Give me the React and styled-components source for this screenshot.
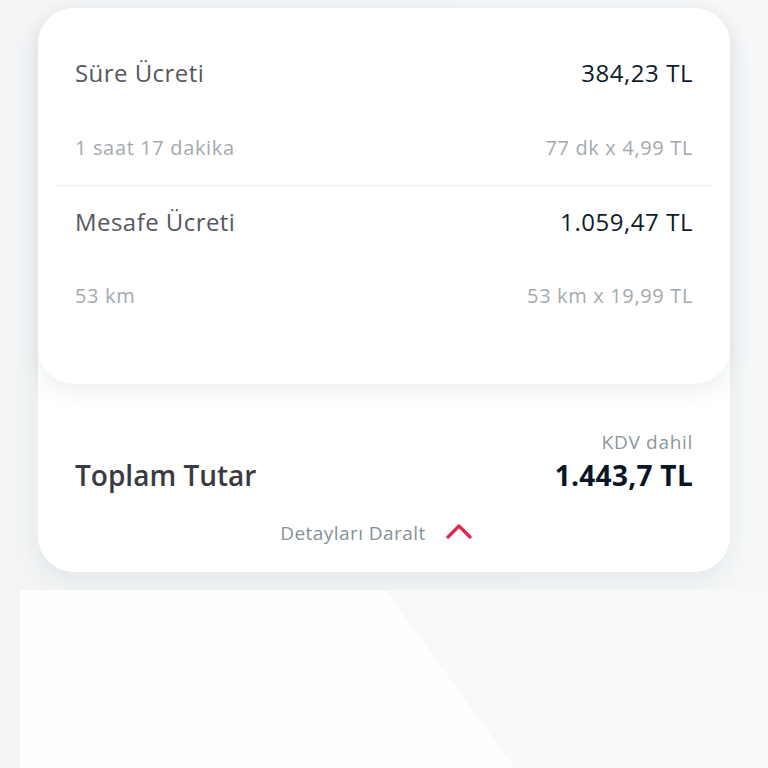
import React from "react";
import styled, { createGlobalStyle } from "styled-components";

const Global = createGlobalStyle`
  html, body { margin: 0; padding: 0; }
  body {
    background: #f3f5f6;
    font-family: "Open Sans", "Noto Sans", sans-serif;
    -webkit-font-smoothing: antialiased;
  }
`;

const Page = styled.div`
  display: flex;
  flex-direction: column;
  min-height: 768px;
  padding-top: 8px;
  box-sizing: border-box;
  background: linear-gradient(90deg, #f2f4f5 0%, #f5f7f8 100%);
  overflow: hidden;
`;

const Cards = styled.div`
  margin: 0 38px 18px 38px;
`;

const OuterCard = styled.div`
  background: #ffffff;
  border-radius: 36px;
  box-shadow: 0 10px 24px rgba(40, 60, 80, 0.07);
  display: flex;
  flex-direction: column;
`;

const InnerCard = styled.div`
  background: #ffffff;
  border-radius: 36px;
  box-shadow: 0 8px 22px rgba(40, 60, 80, 0.08);
  padding: 50px 0 76px;
  display: flex;
  flex-direction: column;
`;

const FeeBlock = styled.div`
  display: flex;
  flex-direction: column;
  gap: ${(p) => p.$gap}px;
  padding: 0 37px;
`;

const Row = styled.div`
  display: flex;
  justify-content: space-between;
  align-items: ${(p) => p.$align || "center"};
`;

const Label = styled.span`
  font-size: 24px;
  line-height: 30px;
  letter-spacing: 0.45px;
  color: #55585e;
`;

const Value = styled.span`
  font-size: 24px;
  line-height: 30px;
  letter-spacing: 0.55px;
  color: #0e1c2b;
`;

const Sub = styled.span`
  font-size: 20px;
  line-height: 24px;
  letter-spacing: 0.65px;
  color: #a3aaaf;
`;

const Divider = styled.div`
  height: 1px;
  background: #eaecee;
  margin: 25px 19px 21px;
`;

const Summary = styled.div`
  padding: 47px 37px 27px;
  display: flex;
  flex-direction: column;
`;

const TotalBox = styled.div`
  display: flex;
  flex-direction: column;
  align-items: flex-end;
  gap: 5px;
`;

const Kdv = styled.span`
  font-size: 19px;
  line-height: 22px;
  letter-spacing: 0.7px;
  color: #8b979d;
`;

const TotalLabel = styled.span`
  font-size: 28px;
  line-height: 34px;
  font-weight: 600;
  color: #3a3b42;
`;

const TotalValue = styled.span`
  font-size: 28px;
  line-height: 34px;
  font-weight: 700;
  letter-spacing: 0.3px;
  color: #0a1528;
`;

const Toggle = styled.button`
  margin-top: 29px;
  margin-right: 16px;
  align-self: center;
  display: flex;
  align-items: center;
  gap: 20px;
  background: none;
  border: none;
  padding: 0;
  font-family: inherit;
  font-size: 19px;
  line-height: 24px;
  letter-spacing: 0.45px;
  color: #84919a;
  cursor: pointer;
`;

const Chevron = styled.svg`
  width: 26px;
  height: 16px;
  margin-bottom: 4px;
`;

const BottomPanel = styled.div`
  flex: 1;
  margin-left: 20px;
  min-height: 178px;
  background: linear-gradient(54deg, #fefefe 56.4%, #f8f9fa 56.4%);
`;

const fees = [
  { label: "Süre Ücreti", value: "384,23 TL", sub: "1 saat 17 dakika", detail: "77 dk x 4,99 TL", gap: 48 },
  { label: "Mesafe Ücreti", value: "1.059,47 TL", sub: "53 km", detail: "53 km x 19,99 TL", gap: 47 },
];

export default function App() {
  return (
    <>
      <Global />
      <Page>
        <Cards>
          <OuterCard>
            <InnerCard>
              {fees.map((f, i) => (
                <React.Fragment key={f.label}>
                  {i > 0 && <Divider />}
                  <FeeBlock $gap={f.gap}>
                    <Row>
                      <Label>{f.label}</Label>
                      <Value>{f.value}</Value>
                    </Row>
                    <Row>
                      <Sub>{f.sub}</Sub>
                      <Sub>{f.detail}</Sub>
                    </Row>
                  </FeeBlock>
                </React.Fragment>
              ))}
            </InnerCard>
            <Summary>
              <Row $align="flex-end">
                <TotalLabel>Toplam Tutar</TotalLabel>
                <TotalBox>
                  <Kdv>KDV dahil</Kdv>
                  <TotalValue>1.443,7 TL</TotalValue>
                </TotalBox>
              </Row>
              <Toggle type="button">
                Detayları Daralt
                <Chevron viewBox="0 0 26 16" fill="none">
                  <path d="M2 14 L13 3 L24 14" stroke="#e2264f" strokeWidth="3.2" strokeLinecap="round" strokeLinejoin="round" />
                </Chevron>
              </Toggle>
            </Summary>
          </OuterCard>
        </Cards>
        <BottomPanel />
      </Page>
    </>
  );
}
